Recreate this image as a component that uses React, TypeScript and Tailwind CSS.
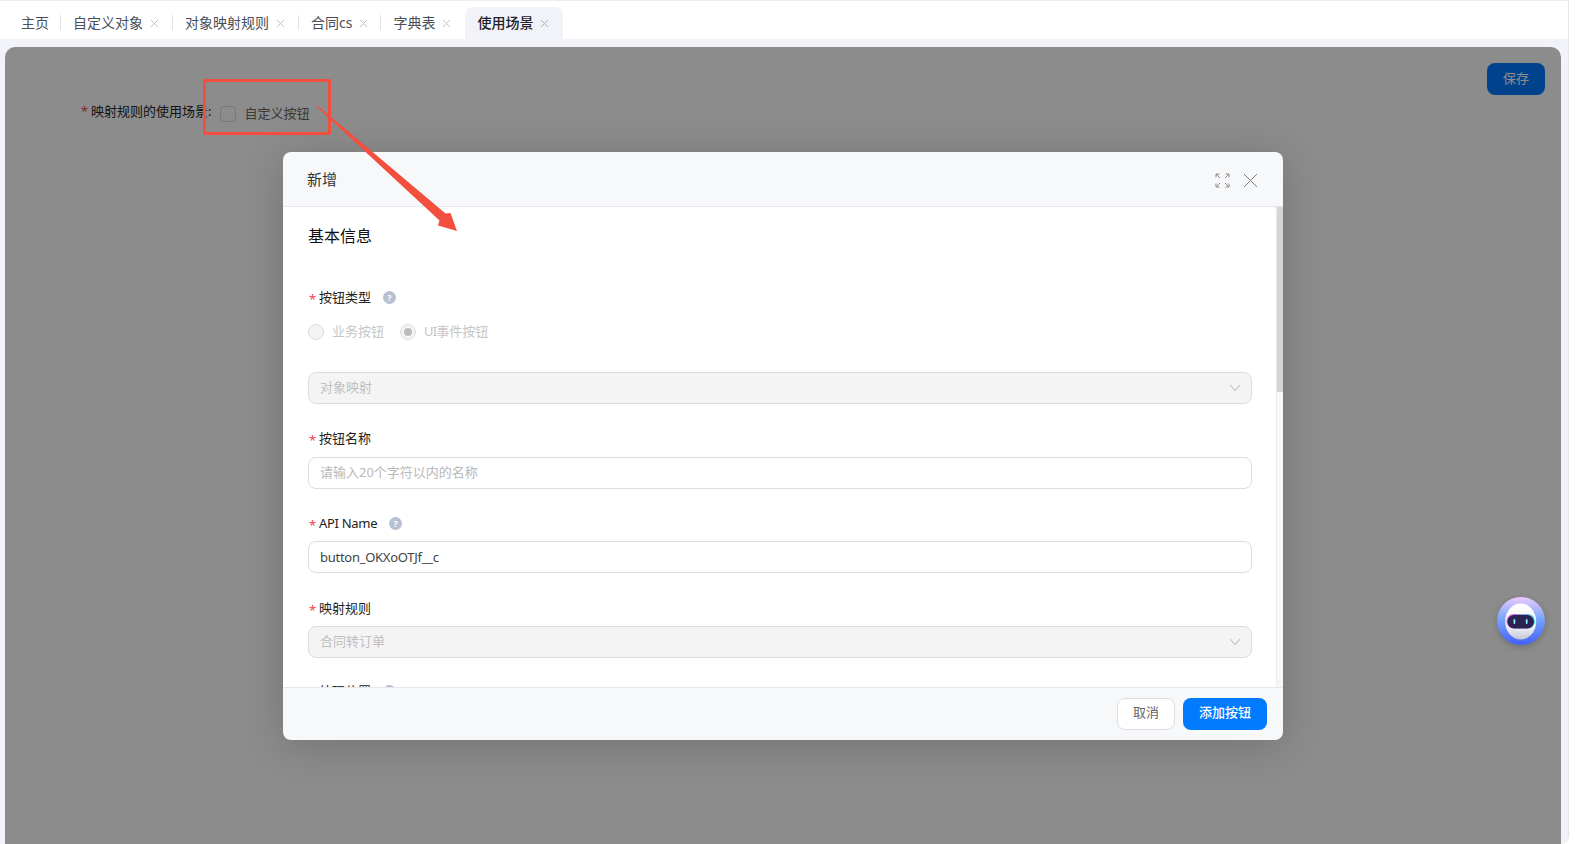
import React from "react";

const font = { fontFamily: '"Noto Sans", "Noto Sans CJK SC", sans-serif' };

function TabClose({ active }: { active?: boolean }) {
  return (
    <svg width="9" height="9" viewBox="0 0 9 9" className="ml-[7px] shrink-0" fill="none" stroke={active ? "#aab0bb" : "#bfc3c9"} strokeWidth="1">
      <path d="M1 1l7 7M8 1L1 8" />
    </svg>
  );
}

function Tab({ label, sep = true, className = "pr-[14px]" }: { label: string; sep?: boolean; className?: string }) {
  return (
    <div className={`relative flex h-full items-center pl-3 text-[14px] text-[#4a4f57] ${className}`}>
      <span className="pb-[2px]">{label}</span>
      <TabClose />
      {sep && <span className="absolute right-0 top-[8px] h-[15px] w-px bg-[#e2e3e6]" />}
    </div>
  );
}

function Help() {
  return (
    <span className="ml-3 flex h-[13px] w-[13px] items-center justify-center rounded-full bg-[#b6c0d0] text-[9px] font-bold leading-none text-white">?</span>
  );
}

function Label({ text, help, className = "", textClass = "" }: { text: string; help?: boolean; className?: string; textClass?: string }) {
  return (
    <div className={`flex h-5 items-center text-[13px] text-[#222] ${className}`}>
      <span className="w-[11px] translate-y-[2px] pl-px text-[13px] leading-none text-[#f5424d]">*</span>
      <span className={`translate-y-[0.5px] ${textClass}`}>{text}</span>
      {help && <Help />}
    </div>
  );
}

function Chevron() {
  return (
    <svg width="12" height="8" viewBox="0 0 12 8" fill="none" stroke="#bdbdbd" strokeWidth="1.1">
      <path d="M1 1l5 5.5L11 1" />
    </svg>
  );
}

function SelectBox({ text, className = "" }: { text: string; className?: string }) {
  return (
    <div className={`flex h-8 items-center justify-between rounded-lg border border-[#dcdde0] bg-[#f4f4f5] pl-[11px] pr-[10px] text-[13px] text-[#bfbfbf] ${className}`}>
      <span>{text}</span>
      <Chevron />
    </div>
  );
}

function InputBox({ text, placeholder, className = "" }: { text: string; placeholder?: boolean; className?: string }) {
  return (
    <div className={`flex h-8 items-center rounded-lg border border-[#dcdde0] bg-white pl-[11px] text-[13px] ${placeholder ? "text-[#b9b9b9]" : "text-[#444]"} ${className}`}>
      {text}
    </div>
  );
}

function Radio({ children, checked, className = "" }: { children: React.ReactNode; checked?: boolean; className?: string }) {
  return (
    <div className={`flex items-center text-[13px] text-[#c6c6c6] ${className}`}>
      <span className="mr-2 flex h-4 w-4 items-center justify-center rounded-full border border-[#dcdde0] bg-[#f4f4f5]">
        {checked && <span className="h-2 w-2 rounded-full bg-[#bdbdbd]" />}
      </span>
      {children}
    </div>
  );
}

function Robot() {
  return (
    <svg width="48" height="48" viewBox="0 0 48 48" className="absolute left-[1497px] top-[597px] z-20 drop-shadow-[0_2px_3px_rgba(0,0,0,0.2)]">
      <defs>
        <linearGradient id="rb" x1="0.5" y1="0" x2="0.5" y2="1">
          <stop offset="0" stopColor="#eccbff" />
          <stop offset="0.45" stopColor="#79a5fb" />
          <stop offset="1" stopColor="#4260fb" />
        </linearGradient>
        <linearGradient id="rh" x1="0.5" y1="0" x2="0.5" y2="1">
          <stop offset="0" stopColor="#ffffff" />
          <stop offset="0.65" stopColor="#f2f2f4" />
          <stop offset="1" stopColor="#c4c6d4" />
        </linearGradient>
        <linearGradient id="rv" x1="0" y1="0" x2="1" y2="0">
          <stop offset="0" stopColor="#f04be0" />
          <stop offset="1" stopColor="#3fe0ee" />
        </linearGradient>
      </defs>
      <circle cx="24" cy="24" r="24" fill="url(#rb)" />
      <ellipse cx="23.7" cy="24.5" rx="15.5" ry="18" fill="url(#rh)" />
      <rect x="9.5" y="17" width="28.5" height="14.5" rx="7.2" fill="url(#rv)" />
      <rect x="10.5" y="18" width="26.5" height="13.5" rx="6.7" fill="#2a2250" />
      <rect x="16.5" y="22" width="1.8" height="5" rx="0.9" fill="#8fe9f5" />
      <rect x="28.8" y="22" width="1.8" height="5" rx="0.9" fill="#8fe9f5" />
    </svg>
  );
}

export default function App() {
  return (
    <div style={font} className="relative flex h-screen w-full overflow-hidden bg-white">
      <div className="flex h-full w-[1569px] flex-col rounded-br-lg border-r border-[#e4e6eb] bg-[#f1f3f9]">
        {/* tabs */}
        <div className="h-px bg-[#eeeeee]" />
        <div className="flex h-[38px] items-end bg-white">
          <div className="flex h-8 items-center">
            <div className="relative flex h-full items-center pl-[21px] pr-3 text-[14px] text-[#4a4f57]">
              <span className="pb-[2px]">主页</span>
              <span className="absolute right-0 top-[8px] h-[15px] w-px bg-[#e2e3e6]" />
            </div>
            <Tab label="自定义对象" />
            <Tab label="对象映射规则" />
            <Tab label="合同cs" className="pr-[13px]" />
            <Tab label="字典表" sep={false} />
            <div className="flex h-full items-center rounded-t-lg bg-[#f1f3f9] pl-3 pr-[14px] text-[14px] font-medium text-[#1f2329]">
              <span className="pb-[2px]">使用场景</span>
              <TabClose active />
            </div>
          </div>
        </div>

        {/* page card */}
        <div className="relative ml-[5px] mr-[7px] mt-2 flex-1 overflow-hidden rounded-t-[10px] bg-white">
          <div className="flex items-start justify-between pl-[76px] pr-4 pt-4">
            <div className="mt-[39px] flex items-start">
              <span className="flex h-5 items-center text-[13px]">
                <span className="w-[10px] text-[#f5424d]">*</span>
                <span className="text-[#262626]">映射规则的使用场景:</span>
              </span>
              <div className="ml-[9px] mt-[2px] flex items-center text-[13px] text-[#666]">
                <span className="mr-2 h-4 w-4 rounded border border-[#d9d9d9] bg-white" />
                自定义按钮
              </div>
            </div>
            <button className="h-8 w-[58px] rounded-lg bg-[#007aff] text-[13px] text-white">保存</button>
          </div>
          <div className="absolute inset-0 bg-black/45" />
        </div>
      </div>

      {/* modal */}
      <div className="absolute left-[283px] top-[152px] z-10 flex h-[588px] w-[1000px] flex-col overflow-hidden rounded-lg bg-[#f7f8fa] shadow-[0_6px_40px_rgba(0,0,0,0.18)]">
        <div className="flex h-[54px] shrink-0 items-center justify-between pl-6 pr-[25px]">
          <span className="mt-px text-[15px] text-[#333]">新增</span>
          <div className="mt-[2px] flex items-center gap-[13px]">
            <svg width="15" height="15" viewBox="0 0 15 15" fill="none" stroke="#8a8a8a" strokeWidth="1">
              <path d="M1 4.5V1h3.5M1 1l4 4M14 4.5V1h-3.5M14 1l-4 4M1 10.5V14h3.5M1 14l4-4M14 10.5V14h-3.5M14 14l-4-4" />
            </svg>
            <svg width="15" height="15" viewBox="0 0 15 15" fill="none" stroke="#7d7d7d" strokeWidth="1">
              <path d="M1 1l13 13M14 1L1 14" />
            </svg>
          </div>
        </div>
        <div className="flex min-h-0 flex-1 flex-col border-t border-[#e7e8ec]">
          <div className="flex min-h-0 flex-1">
            <div className="min-h-0 flex-1 overflow-hidden rounded-tr-md bg-white pl-[25px] pr-6 pt-[17px]">
              <div className="h-6 text-[16px] leading-6 text-[#111]">基本信息</div>
              <Label text="按钮类型" help className="mt-[39px]" />
              <div className="mt-[15px] flex h-5 items-center">
                <Radio>业务按钮</Radio>
                <Radio checked className="ml-4">
                  <span className="tracking-[-0.8px]">UI</span>事件按钮
                </Radio>
              </div>
              <SelectBox text="对象映射" className="mt-[30px]" />
              <Label text="按钮名称" className="mt-6" />
              <InputBox text="请输入20个字符以内的名称" placeholder className="mt-[9px]" />
              <Label text="API Name" help className="mt-6" textClass="tracking-[-0.3px]" />
              <InputBox text="button_OKXoOTJf__c" className="mt-2 pt-px tracking-[-0.27px]" />
              <Label text="映射规则" className="mt-[25px]" />
              <SelectBox text="合同转订单" className="mt-2" />
              <Label text="处理位置" help className="mt-[23px]" />
            </div>
            <div className="w-[7px] shrink-0 border-l border-[#ececef] bg-[#f7f7f8]">
              <div className="h-[185px] bg-[#d5d5d5]" />
            </div>
          </div>
          <div className="flex h-[53px] shrink-0 items-start justify-end gap-2 border-t border-[#e7e8ec] pr-4 pt-[10px]">
            <button className="h-8 w-[58px] rounded-lg border border-[#dcdde0] bg-white pb-[2px] text-[13px] text-[#666]">取消</button>
            <button className="h-8 w-[84px] rounded-lg bg-[#007aff] pb-[2px] text-[13px] font-medium text-white">添加按钮</button>
          </div>
        </div>
      </div>

      <Robot />

      {/* annotation */}
      <div className="absolute left-[203px] top-[79px] z-30 h-[56px] w-[128px] rounded-[2px] border-[3px] border-[#f34f3f]" />
      <svg width="1575" height="844" className="pointer-events-none absolute left-0 top-0 z-30">
        <polygon points="317.5,105.4 445.5,213.5 450.5,213 457,231 438,225.5 439.5,220.5 316.5,106.6" fill="#f34f3f" />
      </svg>
    </div>
  );
}
